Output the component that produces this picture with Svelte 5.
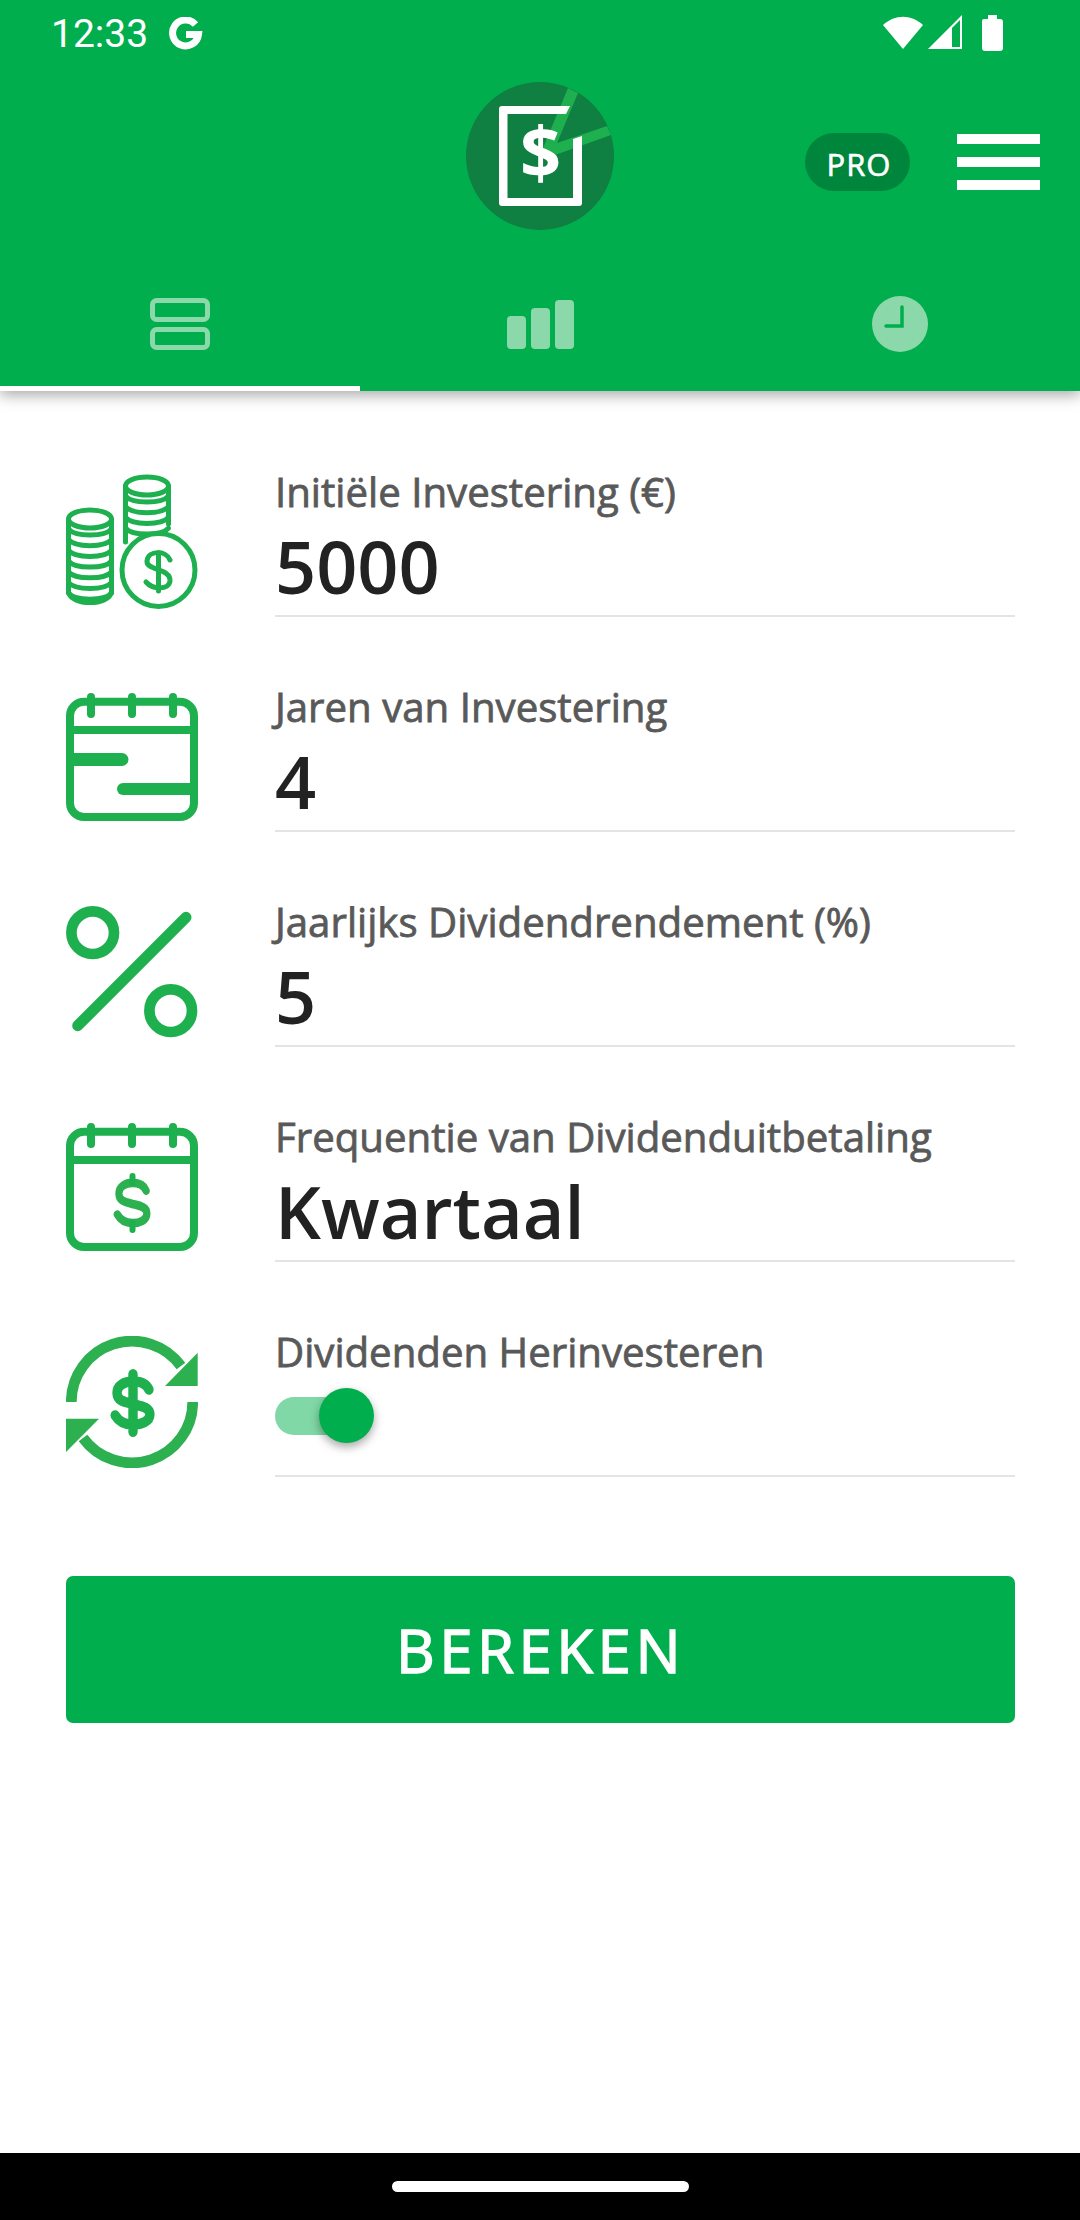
<script>
  const fields = [
    { label: 'Initiële Investering (€)', value: '5000', icon: 'coins' },
    { label: 'Jaren van Investering', value: '4', icon: 'years' },
    { label: 'Jaarlijks Dividendrendement (%)', value: '5', icon: 'percent' },
    { label: 'Frequentie van Dividenduitbetaling', value: 'Kwartaal', icon: 'calendar' },
    { label: 'Dividenden Herinvesteren', icon: 'reinvest', toggle: true }
  ];
  const rightRings = [0, 1, 2, 3];
  const leftRings = [0, 1, 2, 3, 4, 5, 6];
  const ess = 'M 17 -13 C 14 -19 7 -21 0 -21 C -9 -21 -17 -17 -17 -10 C -17 -2 -9 -1 0 1 C 9 3 18 4 18 11 C 18 18 9 21 0 21 C -8 21 -15 18 -19 12';
</script>

<div class="screen">
  <header class="top">
    <div class="status">
      <div class="status-left">
        <span class="time">12:33</span>
        <svg class="g" viewBox="0 0 34 34">
          <path d="M26.500 7.500 A 13 13 0 1 0 29.500 17.500 H 17" fill="none" stroke="#fff" stroke-width="7" />
        </svg>
      </div>
      <svg class="status-icons" viewBox="0 0 120 36">
        <path d="M0 10 C 12 -1 28 -1 40 10 L 20 34 Z" fill="#fff" />
        <path d="M45 34 L 79 0 V 34 Z M 69 32 H 77 V 5 L 69 13 Z" fill="#fff" fill-rule="evenodd" />
        <path d="M99 6 Q 99 4 101 4 H 105 V 0 H 114 V 4 H 117 Q 120 4 120 7 V 33 Q 120 36 117 36 H 102 Q 99 36 99 33 Z" fill="#fff" />
      </svg>
    </div>

    <div class="brand">
      <svg class="logo" viewBox="0 0 148 148">
        <circle cx="74" cy="74" r="74" fill="#0f7f42" />
        <path d="M102 6 L 112 11 L 91 61 L 141 44 L 145 53 L 89 73 L 77 66 Z" fill="#1eb04f" />
        <path d="M36 24 Q 33 24 33 27 V 121 Q 33 124 36 124 H 113 Q 116 124 116 121 V 54 L 107 57 V 116 H 41.500 V 32 H 100 L 104 24 Z" fill="#fff" />
        <text x="74.500" y="97" text-anchor="middle" class="logo-dollar">$</text>
      </svg>
      <div class="pro">PRO</div>
      <div class="burger"><i></i><i></i><i></i></div>
    </div>

    <nav class="tabs">
      <div class="tab active">
        <svg viewBox="0 0 60 52" width="60" height="52">
          <rect x="2.500" y="2.500" width="55" height="19" rx="4" fill="none" stroke="#8bd8aa" stroke-width="5" />
          <rect x="2.500" y="31.500" width="55" height="18" rx="4" fill="none" stroke="#8bd8aa" stroke-width="5" />
        </svg>
      </div>
      <div class="tab">
        <svg viewBox="0 0 67 49" width="67" height="49">
          <rect x="0" y="16" width="19" height="33" rx="4" fill="#8bd8aa" />
          <rect x="24" y="8" width="19" height="41" rx="4" fill="#8bd8aa" />
          <rect x="48" y="0" width="19" height="49" rx="4" fill="#8bd8aa" />
        </svg>
      </div>
      <div class="tab">
        <svg viewBox="0 0 56 56" width="56" height="56">
          <circle cx="28" cy="28" r="28" fill="#8bd8aa" />
          <path d="M30 11 V 30 H 14" fill="none" stroke="#00ae4d" stroke-width="3.500" stroke-linecap="round" />
        </svg>
      </div>
    </nav>
  </header>

  <main class="form">
    {#each fields as f}
      <div class="row">
        <div class="icon">
          {#if f.icon === 'coins'}
            <svg viewBox="0 0 132 135" width="132" height="135">
              <g fill="none" stroke="#1eb04f" stroke-width="5" stroke-linecap="round">
                <ellipse cx="81" cy="12" rx="21.500" ry="9" />
                <path d="M59.500 12 V 68 M102.500 12 V 50" />
                {#each rightRings as i}
                  <path d="M59.500 {22 + i * 10.700} C 66 {30 + i * 10.700} 96 {30 + i * 10.700} 102.500 {22 + i * 10.700}" />
                {/each}
                <ellipse cx="24" cy="45" rx="21.500" ry="9" />
                <path d="M2.500 45 V 118 C 5 132 43 132 45.500 118 V 45" />
                {#each leftRings as i}
                  <path d="M2.500 {55 + i * 10.700} C 9 {63 + i * 10.700} 39 {63 + i * 10.700} 45.500 {55 + i * 10.700}" />
                {/each}
                <circle cx="92.500" cy="96" r="36.500" fill="#fff" />
                <path d="M104 86 C 100 76 82 76 81 87 C 80 97 105 94 104 107 C 103 116 87 116 80 108 M92.500 79 V 117" />
              </g>
            </svg>
          {:else if f.icon === 'years'}
            <svg viewBox="0 0 132 128" width="132" height="128">
              <g fill="none" stroke="#1eb04f" stroke-width="8" stroke-linecap="round">
                <rect x="4" y="8.700" width="124" height="115.300" rx="14" />
                <path d="M25 4 V 21 M66 4 V 21 M107 4 V 21" />
                <path d="M4 37 H 128" stroke-linecap="butt" />
                <path d="M6 66.500 H 56" stroke-width="13" />
                <path d="M57 96 H 126" stroke-width="12" />
              </g>
            </svg>
          {:else if f.icon === 'percent'}
            <svg viewBox="0 0 132 132" width="132" height="132">
              <g fill="none" stroke="#1eb04f" stroke-width="10.700">
                <circle cx="26.700" cy="26.700" r="21.300" />
                <circle cx="104.700" cy="104.700" r="21.300" />
                <path d="M120 11.300 L 11.700 119.700" stroke-linecap="round" stroke-width="11" />
              </g>
            </svg>
          {:else if f.icon === 'calendar'}
            <svg viewBox="0 0 132 128" width="132" height="128">
              <g fill="none" stroke="#1eb04f" stroke-width="8" stroke-linecap="round">
                <rect x="4" y="8.700" width="124" height="115.300" rx="14" />
                <path d="M25 4 V 21 M66 4 V 21 M107 4 V 21" />
                <path d="M4 37 H 128" stroke-linecap="butt" />
                <path transform="translate(66.500 80) scale(0.8 0.957)" d={ess} stroke="#2cb050" stroke-width="9" />
                <path d="M66.500 53 V 60 M66.500 100 V 107" stroke-width="6" />
              </g>
            </svg>
          {:else}
            <svg viewBox="0 0 132 132" width="132" height="132">
              <g fill="none" stroke="#2cb050" stroke-width="10.700">
                <path d="M5.300 66 A 60.700 60.700 0 0 1 115 30" />
                <path d="M126.700 66 A 60.700 60.700 0 0 1 17 102" />
              </g>
              <path transform="translate(67 67) scale(0.94 1.03)" d={ess + ' M 0 -28 V 28'} fill="none" stroke="#1eb04f" stroke-width="10" stroke-linecap="round" />
              <path d="M131.700 16.700 V 50 H 99 Z" fill="#2cb050" />
              <path d="M0 116 V 82.700 H 33 Z" fill="#2cb050" />
            </svg>
          {/if}
        </div>
        <div class="field">
          <div class="label">{f.label}</div>
          {#if f.toggle}
            <div class="toggle-wrap">
              <div class="track"></div>
              <div class="thumb"></div>
            </div>
          {:else}
            <div class="value">{f.value}</div>
          {/if}
        </div>
      </div>
    {/each}

    <button class="calc">BEREKEN</button>
  </main>

  <footer class="navbar"><div class="home"></div></footer>
</div>

<style>
  :global(body) {
    margin: 0;
    background: #fff;
  }

  .screen {
    width: 1080px;
    height: 2220px;
    display: flex;
    flex-direction: column;
    font-family: 'Open Sans', sans-serif;
    overflow: hidden;
  }

  .top {
    height: 391px;
    background: #00ae4d;
    box-shadow: 0 4px 14px rgba(0, 0, 0, 0.35);
    position: relative;
    z-index: 1;
    display: flex;
    flex-direction: column;
  }

  .status {
    height: 68px;
    display: flex;
    justify-content: space-between;
    align-items: center;
    padding: 0 77px 0 51px;
  }

  .status-left {
    display: flex;
    align-items: center;
    gap: 21px;
  }

  .time {
    font-family: Roboto, sans-serif;
    font-size: 39px;
    color: #fff;
  }

  .g {
    width: 34px;
    height: 34px;
  }

  .status-icons {
    width: 120px;
    height: 36px;
    margin-bottom: 2px;
  }

  .brand {
    height: 176px;
    position: relative;
    display: flex;
    align-items: center;
    justify-content: flex-end;
    padding-right: 40px;
  }

  .logo {
    position: absolute;
    left: 466px;
    top: 14px;
    width: 148px;
    height: 148px;
  }

  .logo-dollar {
    font-family: 'Open Sans', sans-serif;
    font-weight: 700;
    font-size: 72px;
    fill: #fff;
  }

  .pro {
    width: 105px;
    height: 58px;
    box-sizing: border-box;
    padding: 4px 0 0 3px;
    border-radius: 29px;
    background: #00853c;
    color: #fff;
    font-size: 31px;
    letter-spacing: 1px;
    -webkit-text-stroke: 0.6px #fff;
    display: flex;
    align-items: center;
    justify-content: center;
    margin-right: 47px;
    margin-top: 12px;
  }

  .burger {
    width: 83px;
    display: flex;
    flex-direction: column;
    gap: 13px;
    margin-top: 12px;
  }

  .burger i {
    display: block;
    height: 10px;
    background: #fff;
  }

  .tabs {
    flex: 1;
    display: grid;
    grid-template-columns: repeat(3, 1fr);
  }

  .tab {
    display: flex;
    align-items: center;
    justify-content: center;
    padding-top: 18px;
    box-sizing: border-box;
    border-bottom: 5px solid transparent;
  }

  .tab.active {
    border-bottom-color: #fff;
  }

  .form {
    flex: 1;
    padding: 70px 65px 0 66px;
  }

  .row {
    display: flex;
    height: 215px;
    box-sizing: border-box;
  }

  .icon {
    width: 209px;
    height: 161px;
    flex: none;
    display: flex;
    align-items: center;
  }

  .icon svg {
    display: block;
  }

  .field {
    flex: 1;
    height: 148px;
    padding-top: 6px;
    border-bottom: 2px solid #e4e4e4;
    position: relative;
  }

  .label {
    font-size: 40.200px;
    line-height: 50px;
    color: #595959;
    -webkit-text-stroke: 0.8px #595959;
  }

  .value {
    font-size: 72px;
    line-height: 96px;
    font-weight: 600;
    color: #222;
    margin-top: 1px;
  }

  .toggle-wrap {
    position: relative;
    height: 60px;
    margin-top: 8px;
  }

  .track {
    position: absolute;
    left: 0;
    top: 12px;
    width: 76px;
    height: 38px;
    border-radius: 19px;
    background: #80d8a6;
  }

  .thumb {
    position: absolute;
    left: 44px;
    top: 3px;
    width: 55px;
    height: 55px;
    border-radius: 50%;
    background: #00ae4d;
    box-shadow: 0 4px 10px rgba(0, 0, 0, 0.35);
  }

  .calc {
    display: block;
    width: 949px;
    height: 147px;
    margin-top: 40px;
    border: none;
    border-radius: 7px;
    background: #00ae4d;
    color: #fff;
    font-family: inherit;
    font-size: 60px;
    letter-spacing: 4.500px;
    -webkit-text-stroke: 1.4px #fff;
  }

  .navbar {
    height: 67px;
    background: #000;
    display: flex;
    align-items: center;
    justify-content: center;
  }

  .home {
    width: 297px;
    height: 11px;
    border-radius: 6px;
    background: #fff;
  }
</style>
